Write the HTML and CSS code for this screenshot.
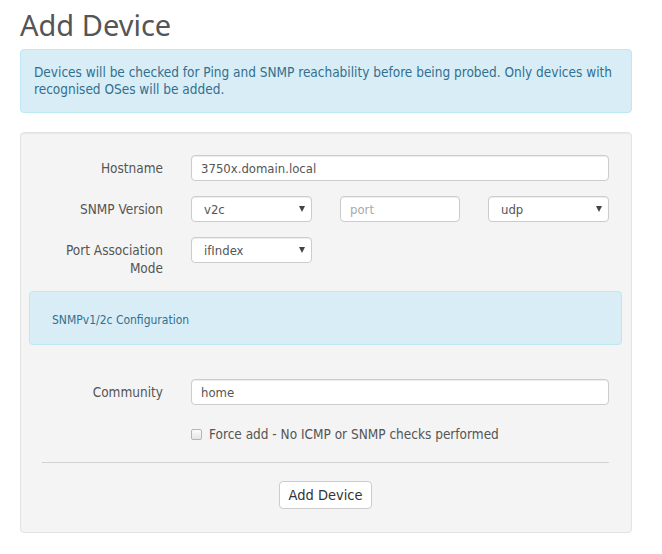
FILE: index.html
```html
<!DOCTYPE html>
<html lang="en">
<head>
<meta charset="utf-8">
<title>Add Device</title>
<link rel="stylesheet" href="styles.css">
</head>
<body>
<div class="page">
  <h1 class="title">Add Device</h1>
  <div class="alert">Devices will be checked for Ping and SNMP reachability before being probed. Only devices with recognised OSes will be added.</div>
  <form class="well">
    <div class="row">
      <label class="label" for="hostname">Hostname</label>
      <input class="control" id="hostname" type="text" value="3750x.domain.local">
    </div>
    <div class="row">
      <label class="label" for="snmpver">SNMP Version</label>
      <div class="triple">
        <div class="select"><select id="snmpver"><option>v2c</option></select></div>
        <input class="control" type="text" placeholder="port">
        <div class="select"><select><option>udp</option></select></div>
      </div>
    </div>
    <div class="row">
      <label class="label" for="portassoc">Port Association Mode</label>
      <div class="narrow">
        <div class="select"><select id="portassoc"><option>ifIndex</option></select></div>
      </div>
    </div>
    <div class="subalert">SNMPv1/2c Configuration</div>
    <div class="row community">
      <label class="label" for="community">Community</label>
      <input class="control" id="community" type="text" value="home">
    </div>
    <div class="row check-row">
      <div></div>
      <label class="check"><input type="checkbox" class="box"><span>Force add - No ICMP or SNMP checks performed</span></label>
    </div>
    <div class="footer">
      <hr class="rule">
      <div class="actions"><button type="button" class="btn">Add Device</button></div>
    </div>
  </form>
</div>
</body>
</html>
```

FILE: styles.css
```css
* { box-sizing: border-box; }
html, body { margin: 0; padding: 0; background: #fff; }
body {
  font-family: "DejaVu Sans Condensed", "DejaVu Sans", sans-serif;
  font-stretch: condensed;
  font-size: 13.5px;
  color: #555;
}
.page { width: 652px; padding: 0 20px; }
.title {
  font-family: "Noto Sans", "Open Sans", sans-serif;
  font-stretch: normal;
  font-weight: normal;
  font-size: 29px;
  line-height: 32px;
  color: #555;
  margin: 9px 0 8px;
}
.alert {
  background: #d9edf7;
  border: 1px solid #bce8f1;
  border-radius: 4px;
  color: #31708f;
  line-height: 17px;
  padding: 14px 14px 14px 13px;
  margin-bottom: 19px;
}
.well {
  display: block;
  background: #f4f4f4;
  border: 1px solid #e3e3e3;
  border-radius: 4px;
  box-shadow: inset 0 1px 1px rgba(0,0,0,.05);
  padding: 22px 0 23px 0;
  margin: 0;
}
.row {
  display: grid;
  grid-template-columns: 142px 418px;
  column-gap: 28px;
  align-items: start;
  margin-bottom: 15px;
}
.label {
  text-align: right;
  padding: 4px 0 0 15px;
  line-height: 18px;
  color: #555;
}
.control {
  display: block;
  width: 100%;
  height: 26px;
  border: 1px solid #ccc;
  border-radius: 4px;
  background: #fff;
  box-shadow: inset 0 1px 1px rgba(0,0,0,.075);
  padding: 0 9px;
  font: inherit;
  font-size: 13px;
  color: #555;
}
.control::placeholder { color: #a9a9a9; }
.triple {
  display: grid;
  grid-template-columns: 121px 120px 121px;
  column-gap: 28px;
}
.narrow { width: 121px; }
.select { position: relative; height: 26px; }
.select select {
  appearance: none;
  -webkit-appearance: none;
  display: block;
  width: 100%;
  height: 26px;
  border: 1px solid #ccc;
  border-radius: 4px;
  background: #fff;
  box-shadow: inset 0 1px 1px rgba(0,0,0,.075);
  padding: 0 20px 0 12px;
  font: inherit;
  font-size: 13px;
  color: #555;
}
.select::after {
  content: "";
  position: absolute;
  right: 7px;
  top: 10px;
  border-left: 3.5px solid transparent;
  border-right: 3.5px solid transparent;
  border-top: 6px solid #444;
  pointer-events: none;
}
.subalert {
  background: #d9edf7;
  border: 1px solid #bce8f1;
  border-radius: 4px;
  color: #31708f;
  font-size: 12px;
  line-height: 14px;
  padding: 21px 22px 17px;
  margin: -1px 9px 0 8px;
}
.community { margin-top: 34px; margin-bottom: 20px; }
.check-row { margin-bottom: 0; }
.check {
  display: flex;
  align-items: center;
  line-height: 18px;
  color: #555;
}
.box {
  appearance: none;
  -webkit-appearance: none;
  width: 11px;
  height: 11px;
  margin: 0 7px 0 0;
  border: 1px solid #b5b5b5;
  border-radius: 2px;
  background: linear-gradient(#fbfbfb, #e6e6e6);
}
.footer { margin: 19px 22px 0 21px; }
.rule {
  border: 0;
  border-top: 1px solid #d3d3d3;
  margin: 0;
  height: 0;
}
.actions {
  display: flex;
  justify-content: center;
  padding-top: 18px;
}
.btn {
  height: 28px;
  width: 93px;
  background: #fff;
  border: 1px solid #ccc;
  border-radius: 4px;
  font: inherit;
  font-size: 14.5px;
  color: #333;
  padding: 0;
}
```
